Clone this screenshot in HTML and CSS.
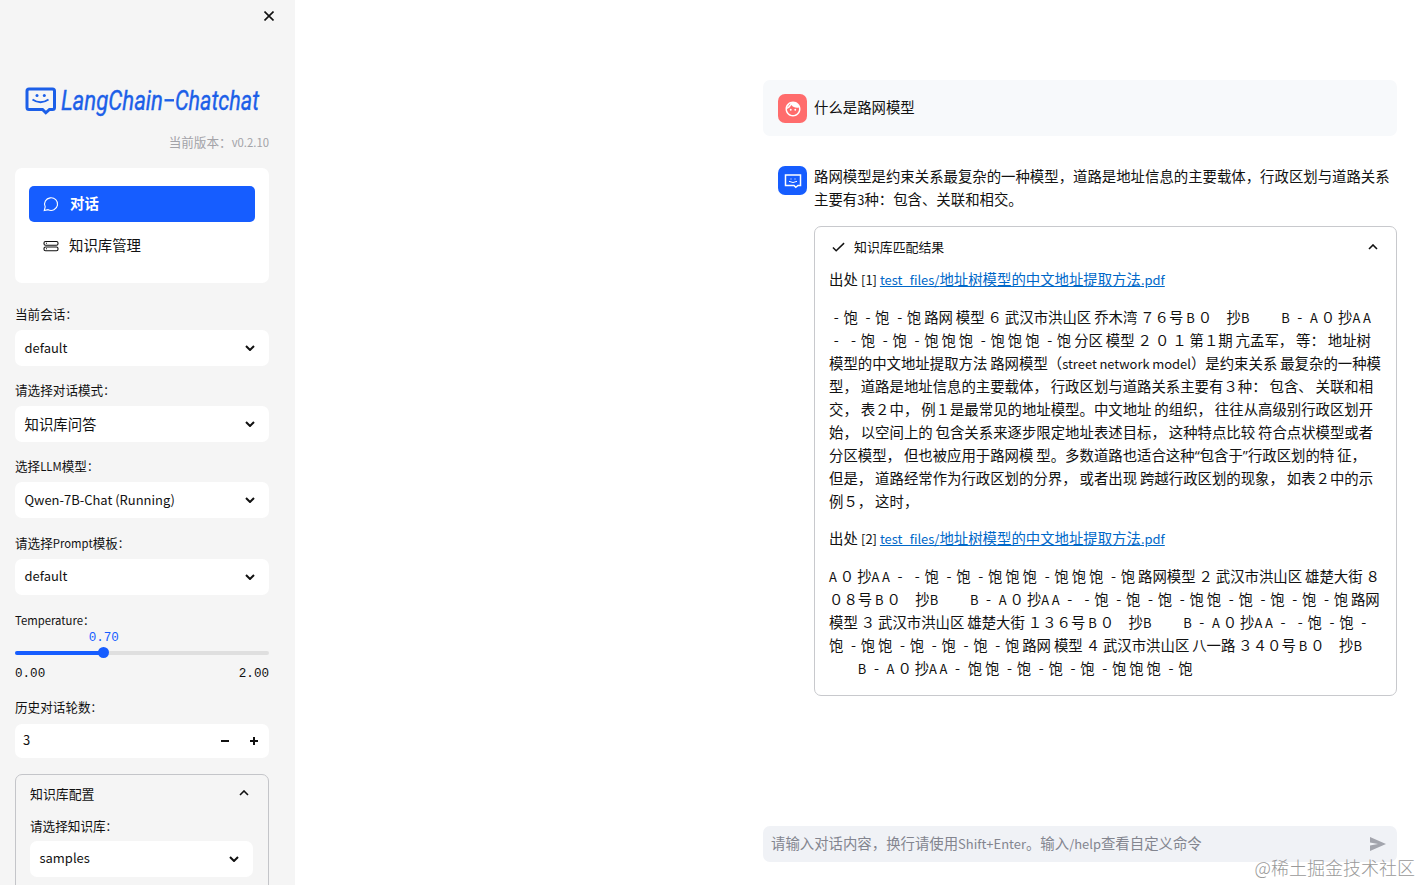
FILE: index.html
```
<!DOCTYPE html>
<html lang="zh-CN">
  <head>
    <meta charset="UTF-8" />
    <meta name="viewport" content="width=device-width, initial-scale=1.0" />
    <title>Langchain-Chatchat WebUI</title>
    <link rel="stylesheet" href="styles.css">
  </head>
  <body>
    <aside class="sidebar">
      <div class="sidebar-top">
        <svg class="close" viewBox="0 0 10 10"><path d="M0.5 0.5l9 9M9.5 0.5l-9 9" /></svg>
      </div>
      <svg class="logo" viewBox="0 0 244 34">
        <path class="logo-line" d="M4 3H27.500Q29.500 3 29.500 5V21.500Q29.500 23.500 27.500 23.500H24.500L20.800 26.800L17.500 23.500H4Q2 23.500 2 21.500V5Q2 3 4 3Z" />
        <path class="logo-smile" d="M7.500 13.500Q15.500 19 23.500 13.500" />
        <circle cx="12" cy="9.500" r="1.500" /><circle cx="19.300" cy="9.500" r="1.500" />
        <text x="36" y="24" textLength="102" lengthAdjust="spacingAndGlyphs">LangChain</text>
        <path class="logo-dash" d="M139.500 14.300h9.500" />
        <text x="150" y="24" textLength="84" lengthAdjust="spacingAndGlyphs">Chatchat</text>
      </svg>
      <p class="version">当前版本：<span class="en">v0.2.10</span></p>

      <nav class="menu">
        <a class="menu-item active">
          <svg viewBox="0 0 16 16"><path d="M1.300 14.500L2.200 10.800A6.500 6.300 0 1 1 5.100 13.700Z" /></svg>
          <span>对话</span>
        </a>
        <a class="menu-item">
          <svg viewBox="0 0 16 16"><rect x="1" y="3.500" width="14" height="3.700" rx="1.500" /><rect x="1" y="9" width="14" height="3.700" rx="1.500" /><path d="M3 5.300h1M3 10.800h1" /></svg>
          <span>知识库管理</span>
        </a>
      </nav>

      <div class="field">
        <label>当前会话<span class="en">：</span></label>
        <div class="select"><span class="en">default</span><svg class="chevron" viewBox="0 0 10 6"><path d="M1 1l4 4 4-4" /></svg></div>
      </div>
      <div class="field">
        <label>请选择对话模式<span class="en">：</span></label>
        <div class="select"><span>知识库问答</span><svg class="chevron" viewBox="0 0 10 6"><path d="M1 1l4 4 4-4" /></svg></div>
      </div>
      <div class="field">
        <label>选择<span class="en">LLM</span>模型<span class="en">：</span></label>
        <div class="select"><span class="en">Qwen-7B-Chat (Running)</span><svg class="chevron" viewBox="0 0 10 6"><path d="M1 1l4 4 4-4" /></svg></div>
      </div>
      <div class="field">
        <label>请选择<span class="en">Prompt</span>模板<span class="en">：</span></label>
        <div class="select"><span class="en">default</span><svg class="chevron" viewBox="0 0 10 6"><path d="M1 1l4 4 4-4" /></svg></div>
      </div>

      <div class="slider">
        <label><span class="en">Temperature：</span></label>
        <div class="track">
          <div class="fill" style="width: 35%">
            <span class="value">0.70</span>
            <span class="thumb"></span>
          </div>
        </div>
        <div class="range"><span>0.00</span><span>2.00</span></div>
      </div>

      <div class="field">
        <label>历史对话轮数<span class="en">：</span></label>
        <div class="number">
          <span class="en">3</span>
          <svg viewBox="0 0 8 8"><path d="M0 4h8" /></svg>
          <svg viewBox="0 0 8 8"><path d="M0 4h8M4 0v8" /></svg>
        </div>
      </div>

      <section class="panel">
        <div class="panel-title"><span>知识库配置</span><svg class="chevron thin" viewBox="0 0 10 6"><path d="M1 5l4-4 4 4" /></svg></div>
        <label>请选择知识库<span class="en">：</span></label>
        <div class="select"><span class="en">samples</span><svg class="chevron" viewBox="0 0 10 6"><path d="M1 1l4 4 4-4" /></svg></div>
      </section>
    </aside>

    <main class="main">
      <div class="chat">
        <div class="message user">
          <div class="avatar avatar-user">
            <svg viewBox="0 0 24 24"><path d="M9 11.750a1.250 1.250 0 1 0 0 2.500a1.250 1.250 0 0 0 0-2.500zM15 11.750a1.250 1.250 0 1 0 0 2.500a1.250 1.250 0 0 0 0-2.500zM12 2C6.480 2 2 6.480 2 12s4.480 10 10 10s10-4.480 10-10S17.520 2 12 2zm0 18c-4.410 0-8-3.590-8-8c0-.050 0-.100 0-.150c2.600-.900 4.700-2.800 5.800-5.300C11.600 8.800 14.300 10.200 17.400 10.200c.780 0 1.530-.090 2.250-.260c.210.710.350 1.270.350 2.060c0 4.410-3.590 8-8 8z" /><path class="hair" d="M4.500 9.300C6 8.300 7.300 6.800 8 5" /></svg>
          </div>
          <p>什么是路网模型</p>
        </div>

        <div class="message">
          <div class="avatar avatar-bot">
            <svg viewBox="0 0 18 16"><path d="M1.500 2H16.500V12.500H14L11.800 14.300L10 12.500H1.500Z" /><path class="smile" d="M5 8.300Q9 10.800 13 8.300M7 5.500v1M11 5.500v1" /></svg>
          </div>
          <div class="content">
            <p>路网模型是约束关系最复杂的一种模型，道路是地址信息的主要载体，行政区划与道路关系<br>主要有<span class="en">3</span>种：包含、关联和相交。</p>
            <section class="result">
              <div class="result-title">
                <svg class="check" viewBox="0 0 14 10"><path d="M1 5.500l3.500 3.500L13 0.800" /></svg>
                <span>知识库匹配结果</span>
                <svg class="chevron thin" viewBox="0 0 10 6"><path d="M1 5l4-4 4 4" /></svg>
              </div>
              <p class="source">出处 <span class="en">[1] </span><a><span class="en">test_files/</span>地址树模型的中文地址提取方法<span class="en">.pdf</span></a></p>
              <p class="excerpt"><i>-</i>饱 <i>-</i>饱 <i>-</i>饱 路网 模型 ６ 武汉市洪山区 乔木湾 ７６号 <span class="en">B</span> ０　抄<span class="en">B</span> 　　<span class="en">B</span> <i>-</i> <span class="en">A</span> ０ 抄<span class="en">A A</span><br>
<i>-</i> <i>-</i>饱 <i>-</i>饱 <i>-</i>饱 饱 饱 <i>-</i>饱 饱 饱 <i>-</i>饱 分区 模型 ２ ０ １ 第１期 亢孟军， 等： 地址树<br>
模型的中文地址提取方法 路网模型（<span class="en">street network model</span>）是约束关系 最复杂的一种模<br>
型， 道路是地址信息的主要载体， 行政区划与道路关系主要有３种： 包含、 关联和相<br>
交， 表２中， 例１是最常见的地址模型。中文地址 的组织， 往往从高级别行政区划开<br>
始， 以空间上的 包含关系来逐步限定地址表述目标， 这种特点比较 符合点状模型或者<br>
分区模型， 但也被应用于路网模 型。多数道路也适合这种<span class="quote">“</span>包含于<span class="quote">”</span>行政区划的特 征，<br>
但是， 道路经常作为行政区划的分界， 或者出现 跨越行政区划的现象， 如表２中的示<br>
例５， 这时，</p>
              <p class="source">出处 <span class="en">[2] </span><a><span class="en">test_files/</span>地址树模型的中文地址提取方法<span class="en">.pdf</span></a></p>
              <p class="excerpt"><span class="en">A</span> ０ 抄<span class="en">A A</span> <i>-</i> <i>-</i>饱 <i>-</i>饱 <i>-</i>饱 饱 饱 <i>-</i>饱 饱 饱 <i>-</i>饱 路网模型 ２ 武汉市洪山区 雄楚大街 ８<br>
０８号 <span class="en">B</span> ０　抄<span class="en">B</span> 　　<span class="en">B</span> <i>-</i> <span class="en">A</span> ０ 抄<span class="en">A A</span> <i>-</i> <i>-</i>饱 <i>-</i>饱 <i>-</i>饱 <i>-</i>饱 饱 <i>-</i>饱 <i>-</i>饱 <i>-</i>饱 <i>-</i>饱 路网<br>
模型 ３ 武汉市洪山区 雄楚大街 １３６号 <span class="en">B</span> ０　抄<span class="en">B</span> 　　<span class="en">B</span> <i>-</i> <span class="en">A</span> ０ 抄<span class="en">A A</span> <i>-</i> <i>-</i>饱 <i>-</i>饱 <i>-</i><br>
饱 <i>-</i>饱 饱 <i>-</i>饱 <i>-</i>饱 <i>-</i>饱 <i>-</i>饱 路网 模型 ４ 武汉市洪山区 八一路 ３４０号 <span class="en">B</span> ０　抄<span class="en">B</span><br>
　　<span class="en">B</span> <i>-</i> <span class="en">A</span> ０ 抄<span class="en">A A</span> <i>-</i> 饱 饱 <i>-</i>饱 <i>-</i>饱 <i>-</i>饱 <i>-</i>饱 饱 饱 <i>-</i>饱</p>
            </section>
          </div>
        </div>
      </div>

      <div class="chat-input">
        <span>请输入对话内容，换行请使用<span class="en">Shift+Enter</span>。输入<span class="en">/help</span>查看自定义命令</span>
        <svg viewBox="0 0 16 14"><path d="M0 0L16 7L0 14V8.600L8 7L0 5.400Z" /></svg>
      </div>
      <div class="watermark">@稀土掘金技术社区</div>
    </main>
  </body>
</html>
```
FILE: styles.css
```
* {
  box-sizing: border-box;
}
html, body {
  height: 100%;
  margin: 0;
  padding: 0;
}
body {
  display: flex;
  overflow: hidden;
  font-family: "Noto Sans CJK SC", sans-serif;
  font-size: 14.4px;
  line-height: 23.04px;
  color: #111;
  background-color: #fff;
  text-spacing-trim: space-all;
}
p {
  margin: 0;
}
svg {
  display: block;
  flex-shrink: 0;
  fill: none;
  stroke: currentColor;
}
/* latin runs are drawn slightly smaller than the CJK text */
.en {
  font-size: 0.9em;
  line-height: 1;
}
.sidebar {
  width: 295px;
  height: 100%;
  flex-shrink: 0;
  padding: 0 26px 0 15px;
  background-color: #f5f5f5;
  overflow: hidden;
}
.sidebar-top {
  display: flex;
  justify-content: flex-end;
  height: 86px;
  padding-top: 11px;
}
.close {
  width: 10px;
  height: 10px;
  margin-right: -5px;
  stroke-width: 1.6;
}
.logo {
  width: 244px;
  height: 34px;
  margin-left: 10px;
  color: #1c5fe8;
  overflow: visible;
}
.logo-line {
  stroke-width: 3;
}
.logo-smile {
  stroke-width: 1.8;
}
.logo-dash {
  stroke-width: 2.4;
}
.logo circle, .logo text {
  fill: currentColor;
  stroke: none;
}
.logo text {
  font-family: Roboto, sans-serif;
  font-style: italic;
  font-size: 27px;
  stroke: currentColor;
  stroke-width: 0.4;
}
.version {
  margin-top: 10px;
  font-size: 12.6px;
  text-align: right;
  color: #a3a3a8;
}
.version, label {
  line-height: 23px;
}
.menu {
  height: 115px;
  margin-top: 15px;
  padding: 18px 14px;
  border-radius: 7px;
  background-color: #fff;
}
.menu-item {
  display: flex;
  align-items: center;
  gap: 10px;
  height: 36px;
  padding-left: 14px;
  border-radius: 5px;
}
.menu-item + .menu-item {
  margin-top: 6px;
}
.menu-item span {
  padding-bottom: 2px;
}
.menu-item svg {
  width: 16px;
  height: 16px;
  stroke-width: 1.1;
}
.menu-item.active {
  gap: 11px;
  color: #fff;
  font-weight: 700;
  background-color: #165dff;
}
label {
  display: block;
  font-size: 12.6px;
}
.field {
  margin-bottom: 12.200px;
}
.menu + .field {
  margin-top: 19px;
}
.select {
  display: flex;
  align-items: center;
  justify-content: space-between;
  height: 36px;
  margin-top: 5px;
  padding: 0 14px 0 9.5px;
  border-radius: 7px;
  background-color: #fff;
}
.select span {
  padding-bottom: 2px;
}
.select .en {
  padding-bottom: 0;
}
.chevron {
  width: 10px;
  height: 6px;
  stroke-width: 2;
}
.thin {
  stroke-width: 1.6;
}
.slider {
  height: 74px;
  margin-top: 13px;
  margin-bottom: 13px;
}
.track {
  height: 4px;
  margin-top: 20px;
  border-radius: 2px;
  background-color: #dfdfdf;
}
.fill {
  position: relative;
  height: 4px;
  border-radius: 2px;
  background-color: #165dff;
}
.thumb {
  position: absolute;
  top: -3.500px;
  right: -5.500px;
  width: 11px;
  height: 11px;
  border-radius: 50%;
  background-color: #165dff;
}
.value {
  position: absolute;
  right: -15px;
  bottom: 5px;
  color: #165dff;
}
.value, .range {
  font-family: "Liberation Mono", monospace;
  font-size: 12.6px;
}
.range {
  display: flex;
  justify-content: space-between;
  margin-top: 8px;
}
.number {
  display: flex;
  align-items: center;
  height: 34px;
  margin-top: 6px;
  padding: 0 11px 0 8px;
  border-radius: 7px;
  background-color: #fff;
}
.number span {
  flex: 1;
}
.number svg {
  width: 8px;
  height: 8px;
  margin-left: 21px;
  stroke-width: 2;
}
.panel {
  height: 150px;
  margin-top: 16px;
  padding: 7px 15px 0 14px;
  border: 1px solid #c4c5c9;
  border-radius: 7px;
}
.panel-title {
  display: flex;
  align-items: center;
  justify-content: space-between;
  height: 23px;
  padding-right: 4px;
  margin-bottom: 9px;
  font-size: 12.900px;
}
.panel .select {
  margin-top: 4px;
}
.main {
  display: flex;
  flex: 1;
  flex-direction: column;
  padding: 80px 24px 23px 468px;
}
.chat {
  flex: 1;
}
.message {
  display: flex;
  gap: 7px;
  padding: 14px 0 14px 15px;
  border-radius: 7px;
}
.message.user {
  height: 56px;
  margin-bottom: 16px;
  background-color: #f7f9fb;
}
.message.user p {
  padding-top: 1px;
}
.content {
  flex: 1;
  margin-top: -2px;
}
.avatar {
  display: flex;
  align-items: center;
  justify-content: center;
  flex-shrink: 0;
  width: 29px;
  height: 29px;
  border-radius: 7px;
  color: #fff;
}
.avatar-user {
  background-color: #ff6c6c;
}
.avatar-user svg {
  width: 18px;
  height: 18px;
  fill: currentColor;
  stroke: none;
}
.avatar-user .hair {
  fill: none;
  stroke: #ff6c6c;
  stroke-width: 1;
}
.avatar-bot {
  background-color: #165dff;
}
.avatar-bot svg {
  width: 18px;
  height: 16px;
  stroke-width: 1.5;
}
.avatar-bot .smile {
  stroke-width: 1;
}
.result {
  height: 470px;
  margin-top: 16px;
  padding: 8px 14px 0;
  border: 1px solid #c8c9cd;
  border-radius: 7px;
}
.result-title {
  display: flex;
  align-items: center;
  height: 23px;
  padding: 0 4px 0 3px;
  font-size: 12.9px;
}
.result-title .chevron {
  margin-left: auto;
}
.check {
  width: 13px;
  height: 10px;
  margin-right: 9px;
  stroke-width: 1.6;
}
.source {
  margin-top: 9px;
  white-space: nowrap;
}
.source a {
  color: #0068c9;
  text-decoration: underline;
}
.excerpt {
  margin-top: 14.400px;
  white-space: nowrap;
  word-spacing: -0.3px;
}
/* full-width hyphen cell */
.excerpt i {
  display: inline-block;
  width: 14.400px;
  font-style: normal;
  text-align: center;
}
.excerpt + .source {
  margin-top: 14.400px;
}
.quote {
  font-family: "Open Sans", sans-serif;
  line-height: 1;
}
.chat-input {
  display: flex;
  align-items: center;
  justify-content: space-between;
  height: 36px;
  padding: 0 11px 0 8px;
  border-radius: 7px;
  color: #83858f;
  background-color: #f0f2f6;
}
.chat-input > span {
  padding-bottom: 2px;
}
.chat-input svg {
  width: 16px;
  height: 14px;
  fill: #a3a5ad;
  stroke: none;
}
.watermark {
  position: absolute;
  right: 6px;
  bottom: 6px;
  font-size: 18px;
  font-weight: 300;
  color: #999;
}
```
